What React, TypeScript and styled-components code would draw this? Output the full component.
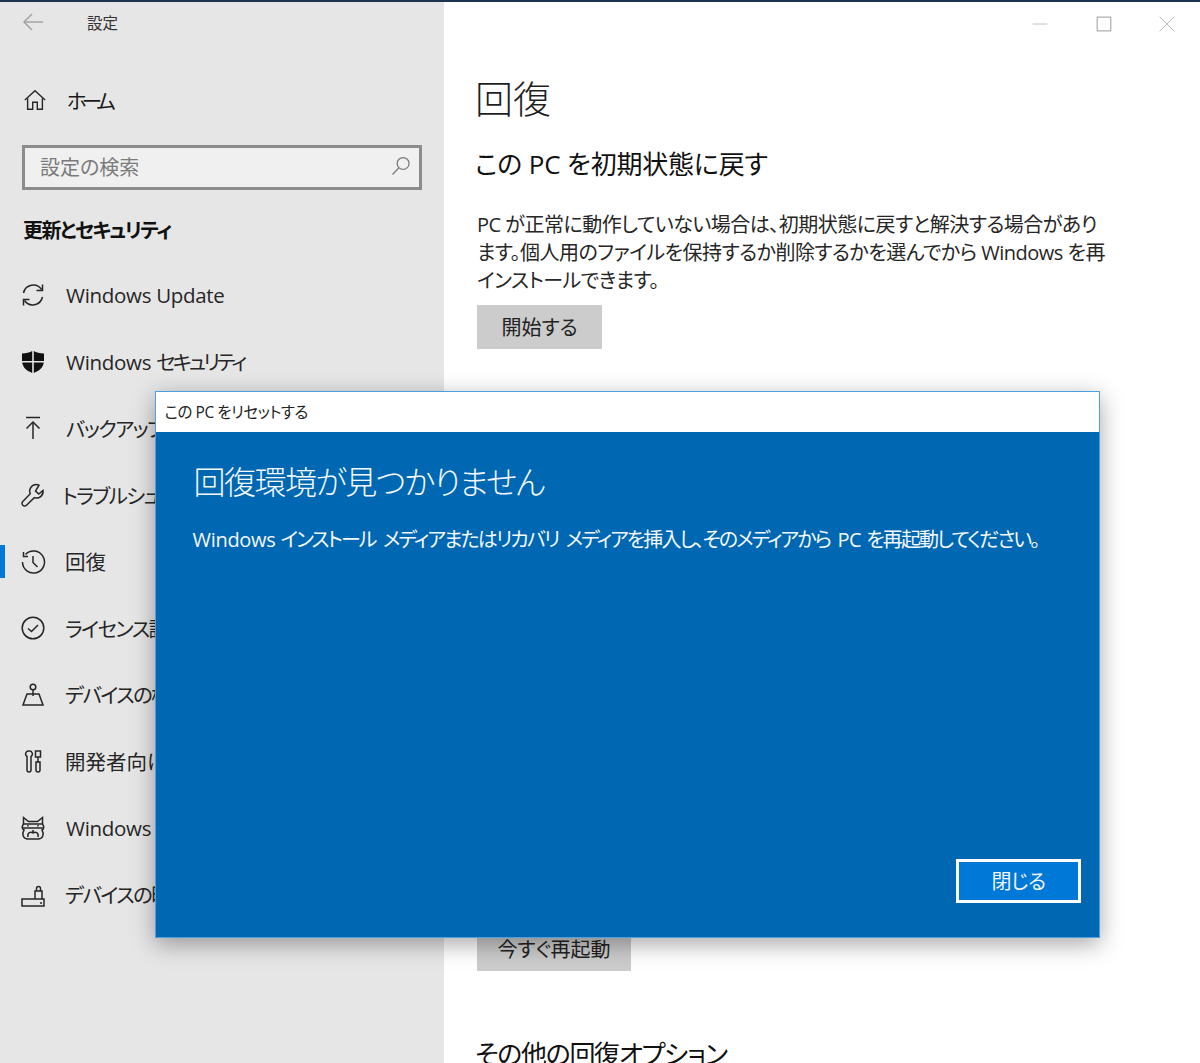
import React from 'react';
import styled, { createGlobalStyle } from 'styled-components';

const GlobalStyle = createGlobalStyle`
    html, body {
        margin: 0;
        padding: 0;
        background: #ffffff;
    }
    * {
        box-sizing: border-box;
    }
`;

const FONT = `"Open Sans", "Noto Sans CJK JP", sans-serif`;

const Screen = styled.div`
    position: relative;
    display: flex;
    width: 1200px;
    height: 1063px;
    overflow: hidden;
    border-top: 2px solid #1d3350;
    font-family: ${FONT};
    font-feature-settings: "palt";
    color: #1a1a1a;
    background: #ffffff;
`;

// latin words keep their natural width inside the tightened japanese text
const Latin = styled.span`
    letter-spacing: -0.3px;
    word-spacing: 0;
`;

const Sidebar = styled.aside`
    flex: 0 0 444px;
    display: flex;
    flex-direction: column;
    background: #e6e6e6;
`;

const SideTop = styled.div`
    display: flex;
    align-items: center;
    gap: 41px;
    height: 42px;
    padding: 0 0 2px 20px;
    font-size: 15.5px;
    color: #333333;
`;

const HomeRow = styled.div`
    display: flex;
    align-items: center;
    gap: 20px;
    height: 40px;
    margin-top: 36px;
    padding-left: 23px;
    font-size: 20.5px;
    letter-spacing: -5px;
`;

const SearchBox = styled.div`
    display: flex;
    align-items: center;
    justify-content: space-between;
    width: 400px;
    height: 45px;
    margin: 25px 0 0 22px;
    padding: 0 7px 3px 15px;
    border: 3px solid #8c8c8c;
    background: #f0f0f0;
    font-size: 20px;
    color: #7b7b7b;
`;

const SectionTitle = styled.div`
    margin: 25px 0 0 23px;
    height: 32px;
    line-height: 32px;
    font-size: 20px;
    font-weight: 700;
    letter-spacing: -1.6px;
    color: #111111;
`;

const NavList = styled.nav`
    display: flex;
    flex-direction: column;
    margin-top: 15px;
`;

const NavRow = styled.div<{ $gap?: number }>`
    display: flex;
    align-items: center;
    gap: ${p => p.$gap ?? 20}px;
    height: 66.6px;
    padding-left: 20px;
    font-size: 20.5px;
    white-space: nowrap;
`;

const ActiveMark = styled.span`
    position: absolute;
    left: 0;
    top: 543px;
    width: 5px;
    height: 33px;
    background: #0078d7;
`;

const NavLabel = styled.span<{ $spacing?: number }>`
    padding-bottom: 1px;
    color: #262626;
    letter-spacing: ${p => p.$spacing ?? -0.3}px;
`;

const Main = styled.main`
    flex: 1;
    display: flex;
    flex-direction: column;
    min-width: 0;
`;

const WindowControls = styled.div`
    display: flex;
    justify-content: flex-end;
    height: 44px;
    padding-right: 1px;
`;

const ControlCell = styled.div`
    display: flex;
    align-items: center;
    justify-content: center;
    width: 63.5px;
    height: 44px;
`;

const Content = styled.div`
    display: flex;
    flex-direction: column;
    padding-left: 33px;
`;

const PageTitle = styled.h1`
    margin: 24px 0 0 -2px;
    font-size: 38px;
    line-height: 56px;
    font-weight: 300;
    color: #1f1f1f;
`;

const SubTitle = styled.h2`
    margin: 20px 0 0 -2px;
    font-size: 26px;
    line-height: 36px;
    font-weight: 400;
    letter-spacing: -0.2px;
    color: #111111;
    white-space: nowrap;
`;

const Paragraph = styled.p`
    width: 630px;
    margin: 29px 0 0;
    font-size: 20px;
    line-height: 28px;
    letter-spacing: -0.5px;
    color: #262626;
`;

const GrayButton = styled.div<{ $width: number }>`
    display: flex;
    align-items: center;
    justify-content: center;
    width: ${p => p.$width}px;
    height: 44px;
    padding-bottom: 2px;
    background: #cccccc;
    font-size: 20px;
    color: #222222;
`;

const StartButton = styled(GrayButton)`
    margin-top: 10px;
`;

const RestartButton = styled(GrayButton)`
    margin-top: 578px;
`;

const OtherTitle = styled(SubTitle)`
    margin-top: 65px;
    letter-spacing: -1.3px;
`;

const Dialog = styled.section`
    position: absolute;
    left: 154.5px;
    top: 389px;
    width: 945.5px;
    height: 547px;
    display: flex;
    flex-direction: column;
    border: 1px solid #4f9fdf;
    box-shadow: 0 6px 22px rgba(0, 0, 0, 0.35);
`;

const DialogBar = styled.div`
    display: flex;
    align-items: center;
    flex: 0 0 40px;
    padding: 0 0 2px 9px;
    background: #ffffff;
    font-size: 15.5px;
    letter-spacing: -0.45px;
    white-space: pre;
    color: #222222;
`;

const DialogBody = styled.div`
    flex: 1;
    display: flex;
    flex-direction: column;
    padding: 24px 18px 34px 38px;
    background: #0067b3;
    color: #ffffff;
`;

const DialogTitle = styled.h2`
    margin: 0;
    font-size: 32px;
    line-height: 52px;
    font-weight: 300;
    letter-spacing: -1.5px;
    color: #f4f8fc;
`;

const DialogText = styled.p`
    margin: 16px 0 0 -1px;
    font-size: 20px;
    line-height: 32px;
    letter-spacing: -1.92px;
    word-spacing: 4px;
    white-space: nowrap;
    color: #f4f8fc;
`;

const DialogFooter = styled.div`
    display: flex;
    justify-content: flex-end;
    margin-top: auto;
`;

const CloseButton = styled.div`
    display: flex;
    align-items: center;
    justify-content: center;
    width: 125px;
    height: 44px;
    padding-bottom: 2px;
    border: 3px solid #ffffff;
    background: #0078d7;
    font-size: 20px;
    letter-spacing: -0.4px;
    color: #f0f6fc;
`;

const Icon: React.FC<{ size?: number; color?: string; children: React.ReactNode }> = ({ size = 26, color = '#262626', children }) => (
    <svg width={size} height={size} viewBox="0 0 26 26" fill="none" stroke={color} strokeWidth="1.5" style={{ flex: 'none' }}>
        {children}
    </svg>
);

const navItems: { label: React.ReactNode; spacing?: number; gap?: number; icon: React.ReactNode }[] = [
    {
        label: 'Windows Update',
        icon: (
            <>
                <path d="M3.5 11A10 10 0 0 1 21.5 7.5" />
                <path d="M22.5 2.5V8.5H16.5" />
                <path d="M22.5 15A10 10 0 0 1 4.5 18.5" />
                <path d="M3.5 23.5V17.5H9.5" />
            </>
        ),
    },
    {
        label: (
            <>
                <Latin>Windows </Latin>セキュリティ
            </>
        ),
        spacing: -3,
        icon: (
            <path
                fill="#111111"
                stroke="none"
                d="M2 4.5C6 4.5 10 3.5 12.2 2V12H2ZM13.8 2C16 3.5 20 4.5 24 4.5V12H13.8ZM2.2 13.6H12.2V24C7 22 3 19 2.2 13.6ZM13.8 13.6H23.8C23 19 19 22 13.8 24Z"
            />
        ),
    },
    {
        label: 'バックアップ',
        spacing: -1.6,
        icon: (
            <>
                <path d="M6 2.5H20" />
                <path d="M13 24V7" />
                <path d="M6.5 13.5L13 7L19.5 13.5" />
            </>
        ),
    },
    {
        label: 'トラブルシューティング',
        spacing: -1.6,
        gap: 16,
        icon: (
            <path d="M16 2.5a6.5 6.5 0 0 0-5.7 9.2L2.8 19.5a2.6 2.6 0 0 0 3.7 3.7l7.8-7.6A6.5 6.5 0 0 0 23 8.5L18.8 12 15.5 9 19 3.2A6.5 6.5 0 0 0 16 2.5Z" />
        ),
    },
    {
        label: '回復',
        spacing: 0,
        gap: 19,
        icon: (
            <>
                <path d="M5.5 5.5A11 11 0 1 1 2.5 13" />
                <path d="M3.5 3V7.5H8" />
                <path d="M13 7V13.5L17.5 18" />
            </>
        ),
    },
    {
        label: 'ライセンス認証',
        spacing: -1.6,
        gap: 19,
        icon: (
            <>
                <circle cx="13" cy="13" r="10.8" />
                <path d="M8 13.5L11.5 16.5L18 10" />
            </>
        ),
    },
    {
        label: 'デバイスの検索',
        spacing: -1.6,
        gap: 19,
        icon: (
            <>
                <circle cx="13" cy="5" r="2.8" />
                <path d="M13 8V14" />
                <path d="M7 12H19L23 23H3Z" />
            </>
        ),
    },
    {
        label: '開発者向け',
        spacing: 0,
        gap: 19,
        icon: (
            <>
                <path d="M9 3A3 3 0 0 0 7 8.5V22a2 2 0 0 0 4 0V8.5A3 3 0 0 0 9 3Z" />
                <path d="M15.5 3H20.5V9H15.5Z" />
                <path d="M18 9V14" />
                <path d="M16 14H20V22a2 2 0 0 1-4 0Z" />
            </>
        ),
    },
    {
        label: 'Windows Insider Program',
        icon: (
            <>
                <path d="M3.5 9V2.5L8.5 6.5H17.5L22.5 2.5V9" />
                <path d="M3.5 9C1.5 12 2 14 4 15C1.5 19 3 24 8 24H18C23 24 24.5 19 22 15C24 14 24.5 12 22.5 9Z" />
                <path d="M2.5 13H23.5" />
                <path d="M8 10V11.5M18 10V11.5" />
                <path d="M13 15V18M8 22C7 17 11 16.5 13 18C15 16.5 19 17 18 22" />
            </>
        ),
    },
    {
        label: 'デバイスの暗号化',
        spacing: -1.6,
        gap: 19,
        icon: (
            <>
                <path d="M2 17H24V24H2Z" />
                <path d="M15 17V9H22V17" />
                <path d="M16.5 9V6.5a2 2 0 0 1 4 0V9" />
                <path d="M20 21H22" />
            </>
        ),
    },
];

const App: React.FC = () => {
    return (
        <>
            <GlobalStyle />
            <Screen>
                <Sidebar>
                    <SideTop>
                        <Icon color="#a3a3a3">
                            <path d="M23 13H4" />
                            <path d="M12 5L4 13L12 21" />
                        </Icon>
                        設定
                    </SideTop>
                    <HomeRow>
                        <Icon size={24}>
                            <path d="M2 13L13 3L24 13" />
                            <path d="M5 11V23H10.5V15.5H15.5V23H21V11" />
                        </Icon>
                        ホーム
                    </HomeRow>
                    <SearchBox>
                        設定の検索
                        <Icon size={22} color="#7b7b7b">
                            <circle cx="15.5" cy="10" r="7" />
                            <path d="M10.5 15L3 23" />
                        </Icon>
                    </SearchBox>
                    <SectionTitle>更新とセキュリティ</SectionTitle>
                    <NavList>
                        {navItems.map((item, i) => (
                            <NavRow key={i} $gap={item.gap}>
                                <Icon>{item.icon}</Icon>
                                <NavLabel $spacing={item.spacing}>{item.label}</NavLabel>
                            </NavRow>
                        ))}
                    </NavList>
                    <ActiveMark />
                </Sidebar>
                <Main>
                    <WindowControls>
                        <ControlCell>
                            <Icon size={16} color="#bdbdbd">
                                <path d="M1 13H25" />
                            </Icon>
                        </ControlCell>
                        <ControlCell>
                            <Icon size={16} color="#b0b0b0">
                                <path d="M2 2H24V24H2Z" strokeWidth="2" />
                            </Icon>
                        </ControlCell>
                        <ControlCell>
                            <Icon size={16} color="#b5b5b5">
                                <path d="M1 1L25 25M25 1L1 25" />
                            </Icon>
                        </ControlCell>
                    </WindowControls>
                    <Content>
                        <PageTitle>回復</PageTitle>
                        <SubTitle>この PC を初期状態に戻す</SubTitle>
                        <Paragraph>
                            PC が正常に動作していない場合は、初期状態に戻すと解決する場合があります。個人用のファイルを保持するか削除するかを選んでから Windows を再インストールできます。
                        </Paragraph>
                        <StartButton $width={125}>開始する</StartButton>
                        <RestartButton $width={154}>今すぐ再起動</RestartButton>
                        <OtherTitle>その他の回復オプション</OtherTitle>
                    </Content>
                </Main>
                <Dialog>
                    <DialogBar>この PC をリセットする</DialogBar>
                    <DialogBody>
                        <DialogTitle>回復環境が見つかりません</DialogTitle>
                        <DialogText>
                            <Latin>Windows </Latin>インストール メディアまたはリカバリ メディアを挿入し、そのメディアから <Latin>PC </Latin>を再起動してください。
                        </DialogText>
                        <DialogFooter>
                            <CloseButton>閉じる</CloseButton>
                        </DialogFooter>
                    </DialogBody>
                </Dialog>
            </Screen>
        </>
    );
};

export default App;
